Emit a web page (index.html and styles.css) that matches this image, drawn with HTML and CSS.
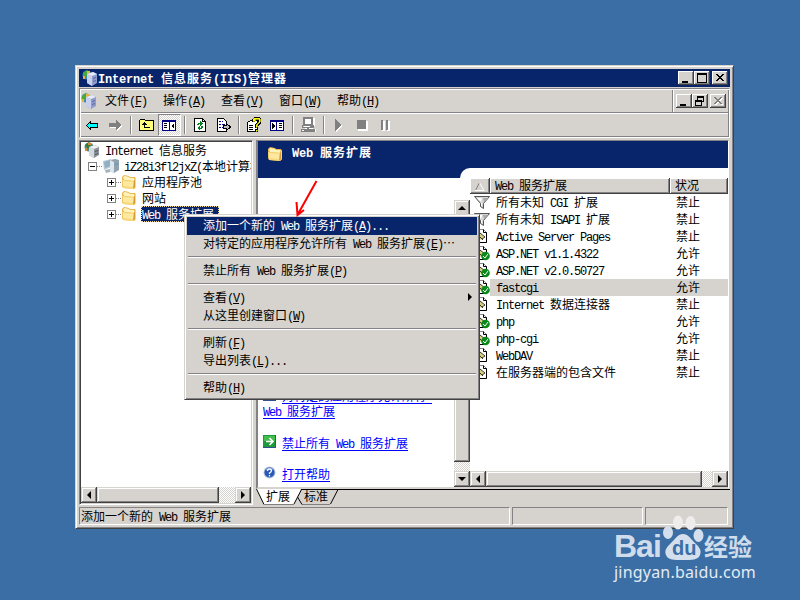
FILE: index.html
```html
<!DOCTYPE html>
<html lang="zh-CN">
<head>
    <meta charset="UTF-8">
    <title>Internet 信息服务(IIS)管理器</title>
    <link rel="stylesheet" href="styles.css">
</head>
<body>
<!-- Icon sprite -->
<svg class="sprite" width="0" height="0">
    <symbol id="iis" viewBox="0 0 16 16">
        <circle cx="5" cy="5" r="4.5" fill="#2f8fc4"/>
        <path d="M1 3l4-3 2 3-3 4-3-1z" fill="#47a83c"/>
        <path d="M5 1h3v3H5zM1 6h2v3H1z" fill="#e8b53a"/>
        <path d="M5 4l6-2 4 2v9l-5 3-5-3z" fill="#8f9ccc"/>
        <path d="M5 4l5 2v10l-5-3z" fill="#c8d0ee"/>
        <path d="M5 4l6-2 4 2-5 2z" fill="#e6eafa"/>
        <path d="M11 8l3-1v1l-3 1zM11 11l3-1v1l-3 1z" fill="#5c6796"/>
    </symbol>
    <symbol id="root" viewBox="0 0 16 16">
        <circle cx="5" cy="5" r="4.5" fill="#4a8c8c"/>
        <path d="M1 3l4-3 2 3-3 4z" fill="#3b7a37"/>
        <path d="M4 1h3v2H4zM1 6h2v3H1z" fill="#d98a2e"/>
        <path d="M5 5l6-2 4 2v8l-5 3-5-3z" fill="#8a9298"/>
        <path d="M5 5l5 2v9l-5-3z" fill="#d3dade"/>
        <path d="M5 5l6-2 4 2-5 2z" fill="#eef2f4"/>
        <path d="M11 9l3-1v1l-3 1zM11 12l3-1v1l-3 1z" fill="#4f565c"/>
    </symbol>
    <symbol id="server" viewBox="0 0 16 16">
        <path d="M0 3l8-2v8l-7 3z" fill="#b6cbd8"/>
        <path d="M1 4l6-2v6l-5 2z" fill="#8fb0c4"/>
        <path d="M7 2l5-1 4 1v10l-5 3-4-2z" fill="#8fa2ad"/>
        <path d="M7 2l4 2v11l-4-2z" fill="#dde6ec"/>
        <path d="M2 12l5-1v3l-4 1z" fill="#a2b3bd"/>
        <path d="M12 6l3-1v1l-3 1z" fill="#38a4d8"/>
    </symbol>
    <symbol id="folder" viewBox="0 0 16 16">
        <path d="M1 3l2-2 5 1 1 1 5 0 1 2v8l-2 2-11-1-1-2z" fill="#e9b44c"/>
        <path d="M2 3l2-1 4 1 1 1 4 0v3l-10-1z" fill="#fff3bd"/>
        <path d="M1 6l11 1 2-3 1 1v8l-2 2-11-1z" fill="#f9d87a"/>
        <path d="M2 7l10 1v5l-10-1z" fill="#fde9a0"/>
        <path d="M13 7l1-2v8l-2 2z" fill="#d69c35"/>
    </symbol>
    <symbol id="funnel" viewBox="0 0 16 16">
        <path d="M.5 2.500h15l-6 7v5l-3-2v-3z" fill="#d6d6d6" stroke="#555"/>
        <path d="M3 4h5l-1 4zM7 9h1v3H7z" fill="#fff"/>
        <path d="M9 4h5l-4 4z" fill="#aaa"/>
    </symbol>
    <symbol id="page" viewBox="0 0 16 16">
        <path d="M1.500 1.500h8l3 3v10h-11z" fill="#fff" stroke="#888"/>
        <path d="M9.500 1.500v3h3v10h-11" fill="none" stroke="#000"/>
        <path d="M3 9l3-4 4 4-3 3z" fill="#d8d078"/>
        <path d="M4 7l5 5M6 5l5 4M8 11l3-2" stroke="#333" fill="none"/>
    </symbol>
    <symbol id="page-ok" viewBox="0 0 16 16">
        <use href="#page"/>
        <circle cx="11.500" cy="11" r="4.300" fill="#0b8a1c"/>
        <path d="M9 11l2 2 3-4" stroke="#fff" fill="none"/>
    </symbol>
</svg>

<div class="window">
    <!-- Title bar -->
    <div class="titlebar">
        <svg class="icon"><use href="#iis"/></svg>
        <span class="title-text"><span class="en">Internet </span>信息服务<span class="en">(IIS)</span>管理器</span>
        <div class="buttons">
            <span class="btn"><svg viewBox="0 0 16 14"><path d="M4 10h6v2H4z"/></svg></span>
            <span class="btn"><svg viewBox="0 0 16 14"><path d="M3 2h10v10H3zM4 4v7h8V4z" fill-rule="evenodd"/></svg></span>
            <span class="btn close"><svg viewBox="0 0 16 14"><path d="M4 3h2v1h1v1h2V4h1V3h2v1h-1v1h-1v1H9v1h1v1h1v1h1v1h-2V9H9V8H7v1H6v1H4V9h1V8h1V7h1V6H6V5H5V4H4z"/></svg></span>
        </div>
    </div>

    <div class="bars">
        <div class="menubar">
            <svg class="icon"><use href="#iis"/></svg>
            <span>文件<span class="en">(<u>F</u>)</span></span>
            <span>操作<span class="en">(<u>A</u>)</span></span>
            <span>查看<span class="en">(<u>V</u>)</span></span>
            <span>窗口<span class="en">(<u>W</u>)</span></span>
            <span>帮助<span class="en">(<u>H</u>)</span></span>
            <div class="buttons mdi">
                <span class="btn"><svg viewBox="0 0 16 14"><path d="M4 10h6v2H4z"/></svg></span>
                <span class="btn"><svg viewBox="0 0 16 14"><path d="M5 2h7v6h-2v4H3V6h2zM6 4v2h4v1h1V4zM4 8v3h5V8z" fill-rule="evenodd"/></svg></span>
                <span class="btn close"><svg viewBox="0 0 16 14"><path d="M5 4h2v1h1v1h2V5h1V4h2v1h-1v1h-1v1h-1v1h1v1h1v1h1v1h-2v-1h-1V9H8v1H7v1H5v-1h1V9h1V8h1V7H7V6H6V5H5z" fill="#fff"/><path d="M4 3h2v1h1v1h2V4h1V3h2v1h-1v1h-1v1H9v1h1v1h1v1h1v1h-2V9H9V8H7v1H6v1H4V9h1V8h1V7h1V6H6V5H5V4H4z" fill="#808080"/></svg></span>
            </div>
        </div>
        <div class="toolbar">
            <span class="tool"><svg class="icon"><path d="M2.500 8.500l4-4v2h7v4h-7v2z" fill="#0ff" stroke="#000"/></svg></span>
            <span class="tool"><svg class="icon"><path d="M3 7h7V4l5 5-5 5v-3H3z" fill="#fff"/><path d="M2 6h7V3l5 5-5 5v-3H2z" fill="#808080"/></svg></span>
            <span class="sep"></span>
            <span class="tool"><svg class="icon"><path d="M1.500 13.500v-10l1-1h4l1 1h8v10z" fill="#ffff7b" stroke="#000"/><path d="M6 5h1v1h1v1h1v1H7v2h5v1H6V8H4V7h1V6h1z"/></svg></span>
            <span class="tool pressed"><svg class="icon"><path d="M1 3h14v11H1z" fill="#000080"/><path d="M2 5h6v8H2zM9 5h5v8H9z" fill="#fff"/><path d="M3 6h3v1H3zM3 8h3v1H3zM3 10h3v1H3zM10 9l3-3v6z"/></svg></span>
            <span class="sep"></span>
            <span class="tool"><svg class="icon"><path d="M2.500 1.500h8l3 3v10h-11z" fill="#fff" stroke="#000"/><path d="M10.500 1.500v3h3" fill="none" stroke="#000"/><path d="M5 7h1V6h2V4l3 3-3 2V7H7v1H5zM11 9v2h-1v1H8v2l-3-3 3-2v2h1V9z" fill="#008020"/></svg></span>
            <span class="tool"><svg class="icon"><path d="M2.500 1.500h6l3 3v10h-9z" fill="#fff" stroke="#000"/><path d="M4 4h2v1H4zM4 7h2v1H4zM4 10h2v1H4zM7 4h1v1H7zM7 7h3v1H7zM7 10h3v1H7z" fill="#000080"/><path d="M8.500 8.500h3v-2l4 3.500-4 3.500v-2h-3z" fill="#c0c0c0" stroke="#000"/></svg></span>
            <span class="sep"></span>
            <span class="tool"><svg class="icon"><path d="M1.500 5.500l3-2h7v9l-3 2h-7z" fill="#fff" stroke="#000"/><path d="M3 8h4v1H3zM3 10h4v1H3zM3 12h4v1H3z"/><path d="M6 4V2l2-2h5l2 2v4l-3 3v2H9V7l3-2V3H9v2H6zM9 12h3v3H9z" fill="#000"/><path d="M7 4V2l2-1h4l1 1v3l-3 3v2h-1V8l3-3V2H9v2zM10 13h1v1h-1z" fill="#ff0" stroke="#ff0" stroke-width=".6"/></svg></span>
            <span class="tool"><svg class="icon"><path d="M1 3h14v11H1z" fill="#000080"/><path d="M2 5h5v8H2zM8 5h6v8H8z" fill="#fff"/><path d="M3 6l3 3-3 3zM10 6h3v1h-3zM10 8h3v1h-3zM10 10h3v1h-3z"/></svg></span>
            <span class="sep"></span>
            <span class="tool"><svg class="icon"><path d="M4 1h11v8h-2v3h4v3H2v-2h3v-3H4z" fill="#fff"/><path d="M3 0h10v8h1v3H9v1h6v3H1v-3h6v-1H2V8h1zM5 2v5h6V2zM3 9v1h7V9zM2 13v1h2v-1z" fill="#808080" fill-rule="evenodd"/></svg></span>
            <span class="sep"></span>
            <span class="tool"><svg class="icon"><path d="M5 3v12l7-6z" fill="#fff"/><path d="M4 2v12l6-6z" fill="#808080"/></svg></span>
            <span class="tool"><svg class="icon"><path d="M4 4h10v10H4z" fill="#fff"/><path d="M3 3h9v9H3z" fill="#808080"/></svg></span>
            <span class="tool"><svg class="icon"><path d="M5 4h3v10H5zM10 4h3v10h-3z" fill="#fff"/><path d="M4 3h2v10H4zM9 3h2v10H9z" fill="#808080"/></svg></span>
        </div>
    </div>

    <div class="panes">
        <!-- Console tree -->
        <div class="tree">
            <ul>
                <li><svg class="icon"><use href="#root"/></svg><span class="label"><span class="en">Internet </span>信息服务</span></li>
                <li class="lv1"><span class="expander minus"></span><svg class="icon"><use href="#server"/></svg><span class="label"><span class="en">iZ28i3fl2jxZ(</span>本地计算机</span></li>
                <li class="lv2"><span class="expander"></span><svg class="icon"><use href="#folder"/></svg><span class="label">应用程序池</span></li>
                <li class="lv2"><span class="expander"></span><svg class="icon"><use href="#folder"/></svg><span class="label">网站</span></li>
                <li class="lv2"><span class="expander"></span><svg class="icon"><use href="#folder"/></svg><span class="label selected"><span class="en">Web </span>服务扩展</span></li>
            </ul>
            <div class="scroll-h">
                <span class="arrow left"></span>
                <span class="thumb"></span>
                <span class="gap"></span>
                <span class="arrow right"></span>
            </div>
        </div>

        <!-- Result pane -->
        <div class="result">
            <div class="view">
                <div class="banner">
                    <svg class="icon"><use href="#folder"/></svg>
                    <span><span class="en">Web </span>服务扩展</span>
                </div>
                <div class="view-body">
                    <div class="tasks">
                        <div class="curve"></div>
                        <div class="tasks-body">
                            <div class="links">
                                <p><svg class="task-icon"><use href="#go"/></svg><a>对特定的应用程序允许所有<span class="en"> </span><br><span class="en">Web </span>服务扩展</a></p>
                                <p><svg class="task-icon" viewBox="0 0 13 13"><g id="go"><path d="M0 0h13v13H0z" fill="#1f9a3a"/><path d="M1 1h11v5H1z" fill="#43bd4b"/><path d="M0 12h13v1H0zM12 0h1v13h-1z" fill="#33518e"/><path d="M3 6.500h7M6.500 3l3.500 3.500L6.500 10" stroke="#fff" stroke-width="1.600" fill="none"/></g></svg><a>禁止所有<span class="en"> Web </span>服务扩展</a></p>
                                <p><svg class="task-icon" viewBox="0 0 13 13"><circle cx="6.500" cy="6.500" r="6" fill="#b8c4dc"/><circle cx="6.500" cy="6.500" r="5" fill="#2858b8"/><path d="M3 4q3-4 7 0" stroke="#6e96dc" fill="none"/><path d="M4.500 5q0-2 2-2t2 1.500-2 2.500v1M6.500 9v1.500" stroke="#fff" stroke-width="1.300" fill="none"/></svg><a>打开帮助</a></p>
                            </div>
                            <div class="scroll-v">
                                <span class="arrow up"></span>
                                <span class="thumb"></span>
                                <span class="gap"></span>
                                <span class="arrow down"></span>
                            </div>
                        </div>
                    </div>
                    <div class="list">
                        <div class="list-head">
                            <span><svg viewBox="0 0 10 9" width="10" height="9"><path d="M.5 8.500L4.500.5" stroke="#808080"/><path d="M4.500.5l4.500 8H0" stroke="#fff" fill="none"/></svg></span>
                            <span><span class="en">Web </span>服务扩展</span>
                            <span>状况</span>
                        </div>
                        <div class="row"><svg class="icon"><use href="#funnel"/></svg><span>所有未知<span class="en"> CGI </span>扩展</span><span>禁止</span></div>
                        <div class="row"><svg class="icon"><use href="#funnel"/></svg><span>所有未知<span class="en"> ISAPI </span>扩展</span><span>禁止</span></div>
                        <div class="row"><svg class="icon"><use href="#page"/></svg><span><span class="en">Active Server Pages</span></span><span>禁止</span></div>
                        <div class="row"><svg class="icon"><use href="#page-ok"/></svg><span><span class="en">ASP.NET v1.1.4322</span></span><span>允许</span></div>
                        <div class="row"><svg class="icon"><use href="#page-ok"/></svg><span><span class="en">ASP.NET v2.0.50727</span></span><span>允许</span></div>
                        <div class="row current"><svg class="icon"><use href="#page-ok"/></svg><span><span class="en">fastcgi</span></span><span>允许</span></div>
                        <div class="row"><svg class="icon"><use href="#page"/></svg><span><span class="en">Internet </span>数据连接器</span><span>禁止</span></div>
                        <div class="row"><svg class="icon"><use href="#page-ok"/></svg><span><span class="en">php</span></span><span>允许</span></div>
                        <div class="row"><svg class="icon"><use href="#page-ok"/></svg><span><span class="en">php-cgi</span></span><span>允许</span></div>
                        <div class="row"><svg class="icon"><use href="#page"/></svg><span><span class="en">WebDAV</span></span><span>禁止</span></div>
                        <div class="row"><svg class="icon"><use href="#page"/></svg><span>在服务器端的包含文件</span><span>禁止</span></div>
                        <div class="scroll-h">
                            <span class="arrow left"></span>
                            <span class="thumb"></span>
                            <span class="gap"></span>
                            <span class="arrow right"></span>
                        </div>
                    </div>
                </div>
            </div>
            <div class="tabs">
                <svg width="474" height="17" viewBox="0 0 474 17">
                    <path d="M44 .5h430" stroke="#000"/>
                    <path d="M0 0l8 15.500h30L45 0z" fill="#fff"/>
                    <path d="M.5 0l7.500 15.500" stroke="#000"/>
                    <path d="M8 15.500h30M46 15.500h28" stroke="#808080"/>
                    <path d="M38 15L45.500.5M41.500 8l4.500 7.500M74.500 15L82 .5" stroke="#000" fill="none"/>
                </svg>
                <span>扩展</span>
                <span>标准</span>
            </div>
        </div>
    </div>

    <div class="statusbar">
        <span>添加一个新的<span class="en"> Web </span>服务扩展</span>
        <span></span>
        <span></span>
    </div>
</div>

<!-- Context menu -->
<ul class="context-menu">
    <li class="active">添加一个新的<span class="en"> Web </span>服务扩展<span class="en">(<u>A</u>)...</span></li>
    <li>对特定的应用程序允许所有<span class="en"> Web </span>服务扩展<span class="en">(<u>E</u>)</span>⋯</li>
    <li class="divider"></li>
    <li>禁止所有<span class="en"> Web </span>服务扩展<span class="en">(<u>P</u>)</span></li>
    <li class="divider"></li>
    <li class="submenu">查看<span class="en">(<u>V</u>)</span></li>
    <li>从这里创建窗口<span class="en">(<u>W</u>)</span></li>
    <li class="divider"></li>
    <li>刷新<span class="en">(<u>F</u>)</span></li>
    <li>导出列表<span class="en">(<u>L</u>)...</span></li>
    <li class="divider"></li>
    <li>帮助<span class="en">(<u>H</u>)</span></li>
</ul>

<svg class="pointer" viewBox="0 0 24 38"><path d="M21.500 1L3 34M1.500 22l1 13L9 30" stroke="#f00" stroke-width="2" fill="none"/></svg>

<div class="watermark">
    <div class="brand">
        <span class="bai">Bai</span>
        <span class="paw">
            <svg viewBox="0 0 42 46"><ellipse cx="6" cy="18.500" rx="5" ry="6.500"/><ellipse cx="16" cy="8.500" rx="5" ry="7" fill="#eeedeb"/><ellipse cx="28.500" cy="9" rx="5" ry="7" fill="#eeedeb"/><ellipse cx="36.500" cy="21.500" rx="5" ry="6.500"/><path d="M21 20c5 0 8 5 12 9s7 7 5 12-8 5-17 5-15 0-17-5 1-8 5-12 7-9 12-9z"/></svg>
            <b>du</b>
        </span>
        <span class="jy">经验</span>
    </div>
    <div class="url">jingyan.baidu.com</div>
</div>
</body>
</html>
```
FILE: styles.css
```css
* {
    box-sizing: border-box;
}

body {
    margin: 0;
    width: 800px;
    height: 600px;
    overflow: hidden;
    background-color: #3a6ea5;
    font-family: "Noto Sans CJK SC", sans-serif;
    font-size: 12px;
    line-height: 16px;
    color: #000;
    white-space: nowrap;
}

ul {
    list-style: none;
    margin: 0;
    padding: 0;
}

/* Latin runs, half the width of a Chinese character */
.en {
    font-family: "Liberation Mono", monospace;
    font-size: 12px;
    line-height: 1;
    letter-spacing: -1.2px;
    white-space: pre;
}

.sprite {
    position: absolute;
}

.icon {
    width: 16px;
    height: 16px;
    flex: none;
    display: block;
}

.tool .icon,
.btn svg {
    shape-rendering: crispEdges;
}

/* Window frame */
.window {
    width: 659px;
    height: 464px;
    margin: 65px 0 0 75px;
    padding: 3px;
    display: flex;
    flex-direction: column;
    background-color: #d6d3ce;
    border: 1px solid #d6d3ce;
    border-right-color: #424142;
    border-bottom-color: #424142;
    box-shadow: inset 1px 1px #fff, inset -1px -1px #848284;
}

.titlebar {
    height: 18px;
    padding: 1px 2px 1px 3px;
    display: flex;
    align-items: center;
    background-color: #08246b;
    color: #fff;
    font-weight: bold;
}

.title-text {
    letter-spacing: 1px;
}

.titlebar .en,
.banner .en {
    letter-spacing: -0.2px;
}

.buttons {
    display: flex;
    margin-left: auto;
}

.btn {
    width: 16px;
    height: 14px;
    background-color: #d6d3ce;
    box-shadow: inset -1px -1px #424142, inset 1px 1px #fff, inset -2px -2px #848284;
}

.btn svg {
    display: block;
    width: 16px;
    height: 14px;
}

.btn.close {
    margin-left: 2px;
}

/* Menu bar and toolbar */
.bars {
    height: 50px;
    margin-top: 1px;
    border: 1px solid #848284;
    border-right-color: #fff;
    border-bottom-color: #fff;
    box-shadow: inset 1px 1px #fff, inset -1px -1px #848284;
    padding: 1px;
}

.menubar {
    height: 23px;
    display: flex;
    align-items: center;
    gap: 16px;
    border-bottom: 1px solid #848284;
    box-shadow: 0 1px #fff;
}

.menubar .icon {
    margin-right: -8px;
}

.menubar > span {
    width: 42px;
    padding-bottom: 2px;
}

.mdi {
    height: 22px;
    align-items: center;
    padding: 0 2px 0 3px;
    border-left: 1px solid #848284;
    box-shadow: inset 1px 0 #fff;
}

.toolbar {
    display: flex;
    height: 22px;
    margin-top: 1px;
}

.tool {
    width: 23px;
    height: 22px;
    padding: 3px 3px;
}

.tool.pressed {
    border: 1px solid #848284;
    border-right-color: #fff;
    border-bottom-color: #fff;
    padding: 2px;
    background: repeating-conic-gradient(#fff 0 25%, #d6d3ce 0 50%) 0 0 / 2px 2px;
}

.sep {
    width: 2px;
    margin: 2px 3px;
    border-left: 1px solid #848284;
    border-right: 1px solid #fff;
}

.panes {
    display: flex;
    margin-top: 2px;
    height: 366px;
}

/* Tree */
.tree {
    width: 174px;
    height: 365px;
    border: 1px solid #848284;
    border-right-color: #fff;
    border-bottom-color: #fff;
    box-shadow: inset 1px 1px #424142, inset -1px -1px #d6d3ce;
    padding: 1px;
    background-color: #fff;
    display: flex;
    flex-direction: column;
    overflow: hidden;
}

.tree ul {
    flex: 1;
    overflow: hidden;
    padding: 0 0 0 3px;
}

.tree li {
    display: flex;
    align-items: center;
    height: 16px;
}

.label {
    margin-left: 4px;
    padding: 0 1px;
    line-height: 16px;
}

.lv1 {
    padding-left: 4px;
}

.lv2 {
    padding-left: 23px;
}

.expander {
    width: 9px;
    height: 9px;
    margin-right: 5px;
    border: 1px solid #848284;
    background: linear-gradient(#000, #000) center / 5px 1px no-repeat,
        linear-gradient(#000, #000) center / 1px 5px no-repeat;
}

.expander.minus {
    background: linear-gradient(#000, #000) center / 5px 1px no-repeat;
    margin-right: 6px;
}

.expander::after {
    content: "";
    display: block;
    width: 5px;
    margin: 3px 0 0 8px;
    border-top: 1px dotted #848284;
}

.label.selected {
    padding-right: 5px;
    background-color: #08246b;
    color: #fff;
    outline: 1px dotted #f7db94;
    outline-offset: -1px;
}

/* Scrollbars */
.scroll-h {
    display: flex;
    height: 16px;
    flex: none;
}

.scroll-v {
    display: flex;
    flex-direction: column;
    width: 16px;
    margin-top: 22px;
}

.arrow,
.thumb {
    background-color: #d6d3ce;
    box-shadow: inset -1px -1px #424142, inset 1px 1px #d6d3ce, inset -2px -2px #848284, inset 2px 2px #fff;
}

.arrow {
    width: 16px;
    height: 16px;
    flex: none;
    display: flex;
    align-items: center;
    justify-content: center;
}

.arrow::before {
    content: "";
    border: 4px solid transparent;
}

.arrow.left::before {
    border-right-color: #000;
    border-left-width: 0;
}

.arrow.right::before {
    border-left-color: #000;
    border-right-width: 0;
}

.arrow.up::before {
    border-bottom-color: #000;
    border-top-width: 0;
}

.arrow.down::before {
    border-top-color: #000;
    border-bottom-width: 0;
}

.thumb {
    flex: 1;
}

.gap {
    background: repeating-conic-gradient(#fff 0 25%, #d6d3ce 0 50%) 0 0 / 2px 2px;
}

.tree .gap {
    width: 16px;
}

.list .gap {
    width: 10px;
}

.scroll-v .gap {
    height: 9px;
}

/* Result pane */
.result {
    flex: 1;
    margin-left: 3px;
    display: flex;
    flex-direction: column;
}

.view {
    height: 349px;
    border: 1px solid #848284;
    border-left-width: 2px;
    border-right: 1px solid #fff;
    border-bottom: 2px solid #d6d3ce;
    background-color: #fff;
    margin-right: 1px;
}

.banner {
    height: 27px;
    padding: 5px 0 0 9px;
    display: flex;
    background-color: #08246b;
    color: #fff;
    font-weight: bold;
    letter-spacing: 1px;
}

.banner .icon {
    margin-right: 9px;
}

.banner > span {
    margin-top: -2px;
}

.view-body {
    display: flex;
    height: 319px;
}

.tasks {
    width: 212px;
    display: flex;
    flex-direction: column;
}

.curve {
    height: 10px;
    background-color: #08246b;
}

.curve::after {
    content: "";
    display: block;
    width: 10px;
    height: 10px;
    margin-left: auto;
    border-top-left-radius: 10px;
    background-color: #fff;
}

.tasks-body {
    height: 309px;
    display: flex;
}

.links {
    width: 196px;
    padding: 211px 0 0 5px;
    line-height: 14px;
    overflow: hidden;
}

.links p {
    margin: 0 0 17px;
}

.links p + p {
    height: 14px;
}

.links a {
    color: #00f;
    text-decoration: underline;
    text-underline-offset: 2px;
}

.task-icon {
    width: 13px;
    height: 13px;
    margin: -8px 6px -4px 0;
    vertical-align: 4px;
}

/* Extension list */
.list {
    flex: 1;
    padding-top: 10px;
    display: flex;
    flex-direction: column;
    min-width: 0;
}

.list-head,
.row {
    display: grid;
    grid-template-columns: 20px 180px 1fr;
    flex: none;
}

.list-head {
    height: 16px;
    line-height: 14px;
}

.list-head > span {
    background-color: #d6d3ce;
    padding-left: 5px;
    box-shadow: inset -1px -1px #424142, inset 1px 1px #fff, inset -2px -2px #848284;
}

.list-head svg {
    display: block;
    margin-top: 4px;
    fill: none;
}

.row {
    height: 17px;
    line-height: 15px;
}

.row .icon {
    margin-left: 4px;
}

.row > span {
    padding-left: 6px;
}

.row.current > span {
    background-color: #d6d3ce;
}

.list .scroll-h {
    margin-top: auto;
}

/* Bottom tabs */
.tabs {
    position: relative;
    display: flex;
    height: 16px;
    padding-left: 10px;
    gap: 14px;
    line-height: 14px;
}

.tabs svg {
    position: absolute;
    left: 0;
    top: 0;
}

.tabs span {
    position: relative;
}

.statusbar {
    display: grid;
    grid-template-columns: 431px 131px 83px;
    gap: 2px;
    height: 18px;
    margin-top: 1px;
    line-height: 15px;
}

.statusbar > span {
    border: 1px solid #848284;
    border-right-color: #fff;
    border-bottom-color: #fff;
    padding-left: 1px;
}

/* Context menu */
.context-menu {
    position: absolute;
    left: 184px;
    top: 214px;
    width: 296px;
    padding: 2px;
    background-color: #d6d3ce;
    border: 1px solid #d6d3ce;
    border-right-color: #424142;
    border-bottom-color: #424142;
    box-shadow: inset 1px 1px #fff, inset -1px -1px #848284;
    line-height: 16px;
}

.context-menu li {
    height: 18px;
    padding-left: 16px;
}

.context-menu .active {
    background-color: #08246b;
    color: #fff;
}

.context-menu .divider {
    height: 2px;
    margin: 3px 1px 4px;
    border-top: 1px solid #848284;
    border-bottom: 1px solid #fff;
}

.context-menu .submenu {
    position: relative;
}

.submenu::after {
    content: "";
    position: absolute;
    right: 5px;
    top: 4px;
    border: 4px solid transparent;
    border-left-color: #000;
    border-right-width: 0;
}

.pointer {
    position: absolute;
    left: 295px;
    top: 180px;
    width: 24px;
    height: 38px;
}

/* Watermark */
.watermark {
    position: absolute;
    left: 614px;
    top: 514px;
    color: #cfdceb;
}

.brand {
    display: flex;
    height: 46px;
}

.bai {
    font: bold 32px/28px "Liberation Sans", sans-serif;
    letter-spacing: -1px;
    margin-top: 18px;
    width: 48px;
}

.paw {
    position: relative;
    width: 42px;
}

.paw svg {
    display: block;
    width: 42px;
    height: 46px;
    fill: #d3dfec;
}

.paw b {
    position: absolute;
    left: 10px;
    top: 24px;
    font: bold 20px/20px "Liberation Sans", sans-serif;
    color: #3a6ea5;
}

.jy {
    font-size: 24px;
    font-weight: bold;
    line-height: 30px;
    margin-top: 17px;
}

.url {
    font: 16px/20px "Noto Sans", sans-serif;
    letter-spacing: 0.2px;
    margin-top: 2px;
    color: #e4ebf3;
}
```
